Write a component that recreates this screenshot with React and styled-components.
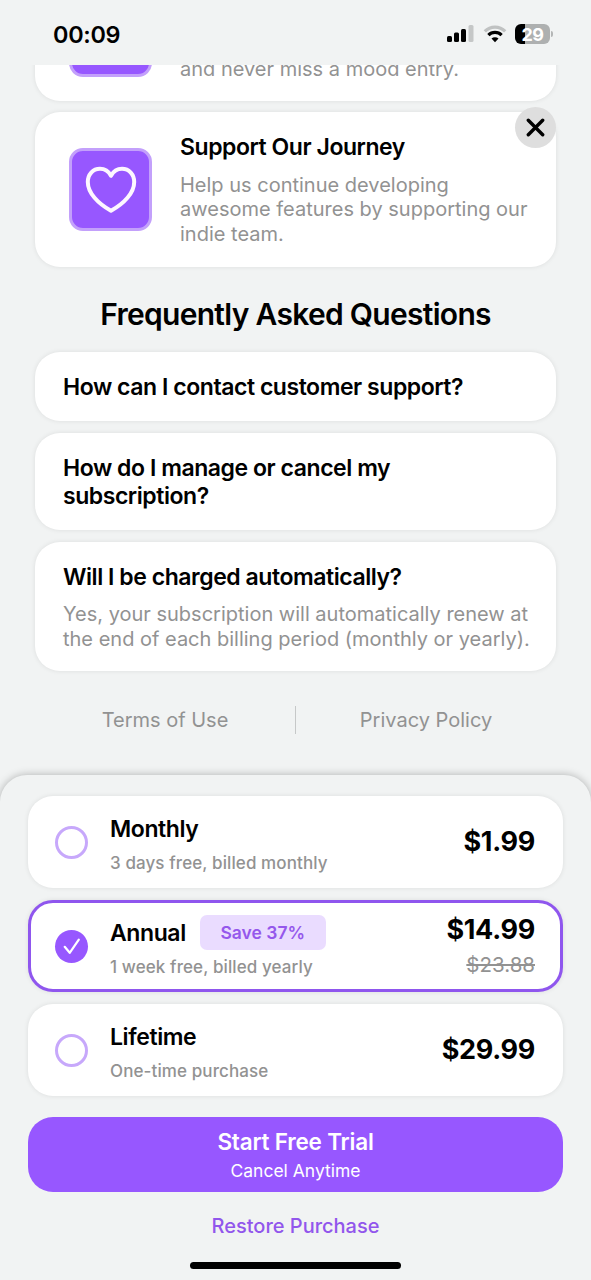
import React, { useState } from 'react'
import styled, { createGlobalStyle, css } from 'styled-components'

const purple = '#9757ff'
const grey = '#929292'

const GlobalStyle = createGlobalStyle`
  * {
    box-sizing: border-box;
  }
  body {
    margin: 0;
    background-color: #f1f3f3;
    color: #000;
    font-family: Inter, 'Liberation Sans', sans-serif;
  }
  button {
    padding: 0;
    border: none;
    background: none;
    color: inherit;
    font: inherit;
    cursor: pointer;
  }
`

const Screen = styled.div`
  position: relative;
  display: flex;
  flex-flow: column;
  width: 591px;
  height: 1280px;
  overflow: hidden;
`

const StatusBar = styled.header`
  display: flex;
  align-items: center;
  justify-content: space-between;
  flex: none;
  height: 65px;
  padding: 3px 38px 0 53px;
`

const Clock = styled.span`
  font-size: 23.4px;
  font-weight: 600;
  letter-spacing: -0.3px;
`

const StatusIcons = styled.div`
  display: flex;
  align-items: center;
`

const Scroller = styled.main`
  display: flex;
  flex-flow: column;
  justify-content: flex-end;
  flex: none;
  height: 710px;
  padding: 0 35px 41px;
  overflow: hidden;
`

const card = css`
  flex: none;
  background-color: #fff;
  border-radius: 25px;
  box-shadow: 0 0 5px rgba(0, 0, 0, 0.09);
`

const FeatureCard = styled.section`
  ${card}
  display: flex;
  align-items: center;
  height: ${props => props.height}px;
  margin-bottom: 11px;
  padding-left: 34px;
`

const FeatureIcon = styled.div`
  display: flex;
  align-items: center;
  justify-content: center;
  flex: none;
  width: 83px;
  height: 83px;
  margin-right: 28px;
  background-color: ${purple};
  border: 3px solid #c3a0fb;
  border-radius: 14px;
`

const FeatureBody = styled.div`
  align-self: ${props => (props.bottom ? 'flex-end' : 'center')};
  padding-bottom: ${props => (props.bottom ? '20px' : '0')};
`

const CardTitle = styled.h3`
  margin: 0;
  font-size: 23px;
  font-weight: 600;
  line-height: 28px;
  letter-spacing: ${props => props.track || -0.45}px;
`

const CardText = styled.p`
  margin: ${props => props.gap || 0}px 0 0;
  color: ${grey};
  font-size: 20px;
  line-height: 24.5px;
  letter-spacing: ${props => props.track || 0}px;
  white-space: nowrap;
`

const SectionTitle = styled.h2`
  margin: 17px 0 19px;
  font-size: 30px;
  font-weight: 600;
  line-height: 38px;
  letter-spacing: -0.7px;
  text-align: center;
`

const FaqCard = styled.section`
  ${card}
  height: ${props => props.height}px;
  margin-top: ${props => props.gap || 0}px;
  padding: 21px 28px 0;
`

const Links = styled.nav`
  display: flex;
  align-items: center;
  height: 28px;
  margin-top: 35px;
`

const LinkItem = styled.a`
  flex: 1;
  color: ${grey};
  font-size: 20px;
  text-align: center;
  & + & {
    border-left: 1px solid #c6c8c8;
    line-height: 28px;
  }
`

const CloseButton = styled.button`
  position: absolute;
  top: 107px;
  left: 515px;
  display: flex;
  align-items: center;
  justify-content: center;
  width: 41px;
  height: 41px;
  background-color: #dedede;
  border-radius: 50%;
`

const Sheet = styled.footer`
  display: flex;
  flex-flow: column;
  align-items: center;
  flex: none;
  position: relative;
  height: 505px;
  padding: 21px 28px 0;
  background-color: #f1f3f3;
  border-radius: 27px 27px 0 0;
  box-shadow: 0 0 9px rgba(0, 0, 0, 0.28);
`

const Plan = styled.div`
  ${card}
  display: flex;
  align-items: center;
  width: 100%;
  height: 92px;
  margin-bottom: 12px;
  padding: 0 28px 0 27px;
  cursor: pointer;
  ${props =>
    props.selected &&
    css`
      padding: 0 25px 0 24px;
      border: 3px solid #8f56ee;
    `}
`

const Radio = styled.span`
  display: flex;
  align-items: center;
  justify-content: center;
  flex: none;
  width: 33px;
  height: 33px;
  margin-right: 22px;
  border: ${props => (props.checked ? 'none' : '3px solid #c7a8fb')};
  border-radius: 50%;
  background-color: ${props => (props.checked ? purple : 'transparent')};
`

const PlanBody = styled.div`
  flex: 1;
`

const PlanTitle = styled.div`
  display: flex;
  align-items: center;
  height: 34px;
  font-size: 23px;
  font-weight: 600;
  letter-spacing: -0.4px;
`

const PlanText = styled.div`
  color: ${grey};
  font-size: 17px;
  font-weight: 500;
  line-height: 20px;
  margin-top: 7px;
  letter-spacing: 0.1px;
`

const Badge = styled.span`
  display: flex;
  align-items: center;
  justify-content: center;
  width: 126px;
  height: 35px;
  margin-left: 14px;
  background-color: #eadcff;
  border-radius: 7px;
  color: #9558ec;
  font-size: 17.5px;
  font-weight: 600;
  letter-spacing: 0;
`

const Prices = styled.div`
  text-align: right;
`

const Price = styled.div`
  font-size: 27px;
  font-weight: 700;
  line-height: 34px;
  letter-spacing: -0.3px;
`

const OldPrice = styled.div`
  margin-top: 3px;
  color: ${grey};
  font-size: 20.5px;
  line-height: 30px;
  text-decoration: line-through;
`

const StartButton = styled.button`
  display: flex;
  flex-flow: column;
  align-items: center;
  flex: none;
  width: 100%;
  height: 75px;
  margin-top: 9px;
  padding-top: 11px;
  background-color: ${purple};
  border-radius: 25px;
  color: #fff;
  strong {
    font-size: 22.5px;
    font-weight: 600;
    line-height: 28px;
    letter-spacing: -0.2px;
  }
  span {
    margin-top: 4px;
    font-size: 17.5px;
    line-height: 22px;
  }
`

const RestoreButton = styled.button`
  margin-top: 21px;
  color: #9156ec;
  font-size: 20px;
  font-weight: 500;
  line-height: 26px;
`

const HomeBar = styled.div`
  width: 211px;
  height: 7px;
  margin-top: 23px;
  background-color: #000;
  border-radius: 4px;
`

const SignalIcon = () => (
  <svg width='27' height='18' viewBox='0 0 27 18'>
    <rect x='0' y='11' width='5' height='6' rx='1.5' />
    <rect x='7' y='7.5' width='5' height='9.5' rx='1.5' />
    <rect x='14' y='4' width='5' height='13' rx='1.5' />
    <rect x='21.5' y='0' width='5' height='17' rx='1.5' fill='#c5c7c7' />
  </svg>
)

const WifiIcon = () => (
  <svg width='24' height='18' viewBox='0 0 24 18' fill='none' strokeWidth='3.2'>
    <path d='M1.8 6.4a14.3 14.3 0 0 1 20.4 0' stroke='#c0c2c2' />
    <path d='M5.4 10.1a9.2 9.2 0 0 1 13.2 0' stroke='#000' />
    <path d='M12 17.3l-3.5-3.7a5 5 0 0 1 7 0z' fill='#000' />
  </svg>
)

const Battery = styled.div`
  display: flex;
  align-items: center;
  justify-content: center;
  width: 35px;
  height: 20px;
  margin-left: 8px;
  background: linear-gradient(90deg, #000 10px, #aeb0b0 10px);
  border-radius: 6px;
  color: #fff;
  font-size: 18px;
  font-weight: 700;
  letter-spacing: -0.4px;
`

const BatteryCap = styled.div`
  width: 2px;
  height: 6px;
  margin-left: 1px;
  background-color: #b4b6b6;
  border-radius: 0 2px 2px 0;
`

const HeartIcon = () => (
  <svg width='52' height='48' viewBox='0 0 52 48' fill='none'>
    <path
      d='M26 9.8C23.4 5 19 2.8 15 2.8C7.8 2.8 2.8 8.5 2.8 16C2.8 27 13 37.5 26 44.8C39 37.5 49.2 27 49.2 16C49.2 8.5 44.2 2.8 37 2.8C33 2.8 28.6 5 26 9.8Z'
      stroke='#fdf7ff'
      strokeWidth='4'
      strokeLinejoin='round'
    />
  </svg>
)

const CrossIcon = () => (
  <svg width='19' height='19' viewBox='0 0 19 19'>
    <path
      d='M2.3 2.3l14.4 14.4M16.7 2.3L2.3 16.7'
      stroke='#000'
      strokeWidth='3.4'
      strokeLinecap='round'
    />
  </svg>
)

const CheckIcon = () => (
  <svg width='18' height='17' viewBox='0 0 18 17' fill='none'>
    <path
      d='M1.7 8.8l5 6L15.8 1.6'
      stroke='#fff'
      strokeWidth='2.2'
      strokeLinecap='round'
      strokeLinejoin='round'
    />
  </svg>
)

const plans = [
  { name: 'Monthly', text: '3 days free, billed monthly', price: '$1.99' },
  {
    name: 'Annual',
    text: '1 week free, billed yearly',
    price: '$14.99',
    oldPrice: '$23.88',
    badge: 'Save 37%'
  },
  { name: 'Lifetime', text: 'One-time purchase', price: '$29.99' }
]

const App = () => {
  const [selected, setSelected] = useState('Annual')

  return (
    <Screen>
      <GlobalStyle />
      <StatusBar>
        <Clock>00:09</Clock>
        <StatusIcons>
          <SignalIcon />
          <div style={{ width: 9 }} />
          <WifiIcon />
          <Battery>29</Battery>
          <BatteryCap />
        </StatusIcons>
      </StatusBar>
      <Scroller>
        <FeatureCard height={131}>
          <FeatureIcon />
          <FeatureBody bottom>
            <CardText>and never miss a mood entry.</CardText>
          </FeatureBody>
        </FeatureCard>
        <FeatureCard height={155}>
          <FeatureIcon>
            <HeartIcon />
          </FeatureIcon>
          <FeatureBody>
            <CardTitle>Support Our Journey</CardTitle>
            <CardText gap={12}>
              Help us continue developing
              <br />
              awesome features by supporting our
              <br />
              indie team.
            </CardText>
          </FeatureBody>
        </FeatureCard>
        <SectionTitle>Frequently Asked Questions</SectionTitle>
        <FaqCard height={69}>
          <CardTitle>How can I contact customer support?</CardTitle>
        </FaqCard>
        <FaqCard height={97} gap={12}>
          <CardTitle>
            How do I manage or cancel my
            <br />
            subscription?
          </CardTitle>
        </FaqCard>
        <FaqCard height={129} gap={12}>
          <CardTitle>Will I be charged automatically?</CardTitle>
          <CardText gap={11}>
            Yes, your subscription will automatically renew at
            <br />
            the end of each billing period (monthly or yearly).
          </CardText>
        </FaqCard>
        <Links>
          <LinkItem>Terms of Use</LinkItem>
          <LinkItem>Privacy Policy</LinkItem>
        </Links>
      </Scroller>
      <Sheet>
        {plans.map(plan => (
          <Plan
            key={plan.name}
            selected={plan.name === selected}
            onClick={() => setSelected(plan.name)}
          >
            <Radio checked={plan.name === selected}>
              {plan.name === selected && <CheckIcon />}
            </Radio>
            <PlanBody>
              <PlanTitle>
                {plan.name}
                {plan.badge && <Badge>{plan.badge}</Badge>}
              </PlanTitle>
              <PlanText>{plan.text}</PlanText>
            </PlanBody>
            <Prices>
              <Price>{plan.price}</Price>
              {plan.oldPrice && <OldPrice>{plan.oldPrice}</OldPrice>}
            </Prices>
          </Plan>
        ))}
        <StartButton>
          <strong>Start Free Trial</strong>
          <span>Cancel Anytime</span>
        </StartButton>
        <RestoreButton>Restore Purchase</RestoreButton>
        <HomeBar />
      </Sheet>
      <CloseButton aria-label='Close'>
        <CrossIcon />
      </CloseButton>
    </Screen>
  )
}

export default App
